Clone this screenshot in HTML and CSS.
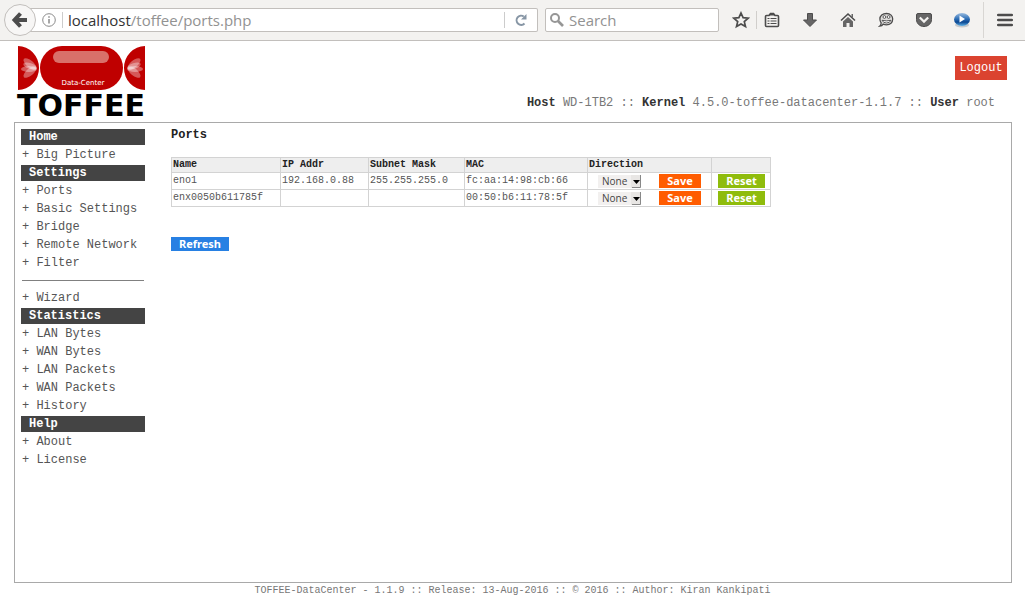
FILE: index.html
```html
<!DOCTYPE html>
<html lang="en">
<head>
<meta charset="utf-8">
<title>TOFFEE-DataCenter - Ports</title>
<link rel="stylesheet" href="styles.css">
</head>
<body>
<div class="toolbar">
  <button class="back" type="button" aria-label="Back">
    <svg width="32" height="32" viewBox="0 0 32 32"><circle cx="16" cy="16" r="15.500" fill="#f7f6f5" stroke="#c2bfbc"/><path d="M16.500 9.500L10.500 16L16.500 22.500M11 16H23" fill="none" stroke="#4c4c4c" stroke-width="4"/></svg>
  </button>
  <div class="url">
    <svg width="14" height="14" viewBox="0 0 14 14"><circle cx="7" cy="7" r="6.300" fill="none" stroke="#8a8a8a"/><path d="M7 6v4.500M7 3.300v1.500" stroke="#8a8a8a" stroke-width="1.500"/></svg>
    <span class="address"><b>localhost</b>/toffee/ports.php</span>
    <button class="reload" type="button" aria-label="Reload">
      <svg width="14" height="14" viewBox="0 0 14 14"><path d="M10.500 10.500A4.600 4.600 0 1 1 9.800 3.500" fill="none" stroke="#8796a5" stroke-width="2"/><path d="M12.500 1v5.500H7z" fill="#8796a5"/></svg>
    </button>
  </div>
  <label class="search">
    <svg width="14" height="14" viewBox="0 0 14 14"><circle cx="5" cy="5" r="4" fill="none" stroke="#969696" stroke-width="2"/><path d="M8 8L13 13" stroke="#969696" stroke-width="2.600"/></svg>
    <input type="text" placeholder="Search" aria-label="Search">
  </label>
  <div class="tools">
    <button class="tool star" type="button" aria-label="Bookmark"><svg width="18" height="18" viewBox="0 0 18 18"><path d="M9 2l2.100 4.700 5.100.5-3.900 3.400 1.200 5L9 13l-4.500 2.600 1.200-5L1.800 7.200l5.100-.5z" fill="none" stroke="#4c4c4c" stroke-width="1.700"/></svg></button>
    <button class="tool ruled" type="button" aria-label="Bookmarks list"><svg width="16" height="16" viewBox="0 0 16 16"><path d="M1.500 4.500q0-1 1-1H5l1.500-2h3l1.500 2h2.500q1 0 1 1v9q0 1-1 1h-11q-1 0-1-1z" fill="#f3f2f0" stroke="#4c4c4c" stroke-width="1.600"/><path d="M5 3.500l1.500-2h3l1.500 2z" fill="#4c4c4c"/><path d="M3.500 6.500h2M3.500 9h2M3.500 11.500h2M6.500 6.500h6M6.500 9h6M6.500 11.500h6" stroke="#4c4c4c" stroke-width="1.200"/></svg></button>
    <button class="tool" type="button" aria-label="Downloads"><svg width="16" height="16" viewBox="0 0 16 16"><path d="M5.500 1.500h5V8h4L8 14.500 1.500 8h4z" fill="#666" stroke="#4c4c4c"/></svg></button>
    <button class="tool" type="button" aria-label="Home"><svg width="16" height="16" viewBox="0 0 16 16"><path d="M1 8.500L8 2l7 6.500" fill="none" stroke="#4c4c4c" stroke-width="1.600"/><path d="M3 9.500l5-4.500 5 4.500V15H9.500v-4h-3v4H3zM11.500 2H13v4l-1.500-1.500z" fill="#666"/></svg></button>
    <button class="tool" type="button" aria-label="Chat"><svg width="16" height="16" viewBox="0 0 16 16"><path d="M8.500 1.500c4 0 6.200 2.400 6.200 5.600 0 3.400-2.500 5.800-6.200 5.800-1.300 0-2.400-.3-3.300-.7-.6 1-1.800 1.900-3.500 2 .9-.8 1.400-1.900 1.500-3.200C2.300 9.900 1.900 8.600 1.900 7.100c0-3.200 2.600-5.600 6.600-5.600z" fill="#dddcda" stroke="#4c4c4c" stroke-width="1.300"/><circle cx="6.400" cy="5" r="1.400" fill="#fff" stroke="#4c4c4c" stroke-width=".9"/><circle cx="10.600" cy="5" r="1.400" fill="#fff" stroke="#4c4c4c" stroke-width=".9"/><path d="M4 8.300q4.500 1.200 9 0-1.200 2.700-4.500 2.700T4 8.300z" fill="#fff" stroke="#4c4c4c" stroke-width=".9"/></svg></button>
    <button class="tool" type="button" aria-label="Pocket"><svg width="16" height="16" viewBox="0 0 16 16"><path d="M2 1.500h12q1.500 0 1.500 1.500v4.500c0 4-3.200 7-7.500 7S.5 11.500.5 7.500V3Q.5 1.500 2 1.500z" fill="#666" stroke="#4c4c4c"/><path d="M3.800 5.500L8 9.600l4.200-4.100" fill="none" stroke="#f3f2f0" stroke-width="2.200"/></svg></button>
    <button class="tool" type="button" aria-label="Media player"><svg width="16" height="16" viewBox="0 0 16 16"><defs><linearGradient id="orb" x2="0" y2="1"><stop stop-color="#9bbcdf"/><stop offset=".45" stop-color="#2d6fb7"/><stop offset=".7" stop-color="#0b4791"/><stop offset="1" stop-color="#5fb3ea"/></linearGradient></defs><ellipse cx="8" cy="13" rx="7" ry="2.500" fill="#c5c9cd"/><ellipse cx="8" cy="7.500" rx="8" ry="6.500" fill="url(#orb)"/><path d="M5.500 3.500L11 7l-5.500 3.500z" fill="#fff"/></svg></button>
    <button class="tool menu" type="button" aria-label="Menu"><svg width="16" height="16" viewBox="0 0 16 16"><path d="M1.200 3h13.600M1.200 8h13.600M1.200 13h13.600" stroke="#4c4c4c" stroke-width="2.600" stroke-linecap="round"/></svg></button>
  </div>
</div>

<header class="masthead">
  <svg class="logo" width="134" height="80" viewBox="-2 0 134 80" role="img" aria-label="Toffee Data-Center">
    <path d="M2 1a21 22 0 0 1 0 44zM129 1a21 22 0 0 0 0 44z" fill="#bf0000"/>
    <rect x="24" y="1" width="83" height="44" rx="22" fill="#bf0000"/>
    <rect x="37" y="6" width="56" height="12" rx="6" fill="#d9706a"/>
    <g fill="#fff" fill-opacity=".35">
      <ellipse cx="14" cy="19" rx="8" ry="3.500" transform="rotate(40 14 19)"/>
      <ellipse cx="14" cy="27" rx="8" ry="3.500" transform="rotate(-40 14 27)"/>
      <ellipse cx="14" cy="21" rx="7" ry="3" transform="rotate(18 14 21)"/>
      <ellipse cx="13" cy="24" rx="8" ry="3"/>
      <ellipse cx="118" cy="19" rx="8" ry="3.500" transform="rotate(-40 118 19)"/>
      <ellipse cx="118" cy="27" rx="8" ry="3.500" transform="rotate(40 118 27)"/>
      <ellipse cx="118" cy="21" rx="7" ry="3" transform="rotate(-18 118 21)"/>
      <ellipse cx="119" cy="24" rx="8" ry="3"/>
    </g>
    <text class="logo-tag" x="67" y="40">Data-Center</text>
    <text class="logo-name" x="65" y="71">TOFFEE</text>
  </svg>
  <div class="session">
    <button class="logout" type="button">Logout</button>
    <p class="host"><b>Host</b> WD-1TB2 :: <b>Kernel</b> 4.5.0-toffee-datacenter-1.1.7 :: <b>User</b> root</p>
  </div>
</header>

<div class="panel">
  <nav class="sidebar">
    <h2>Home</h2>
    <a href="#">+ Big Picture</a>
    <h2>Settings</h2>
    <a href="#">+ Ports</a>
    <a href="#">+ Basic Settings</a>
    <a href="#">+ Bridge</a>
    <a href="#">+ Remote Network</a>
    <a href="#">+ Filter</a>
    <hr>
    <a href="#">+ Wizard</a>
    <h2>Statistics</h2>
    <a href="#">+ LAN Bytes</a>
    <a href="#">+ WAN Bytes</a>
    <a href="#">+ LAN Packets</a>
    <a href="#">+ WAN Packets</a>
    <a href="#">+ History</a>
    <h2>Help</h2>
    <a href="#">+ About</a>
    <a href="#">+ License</a>
  </nav>
  <main class="content">
    <h1>Ports</h1>
    <table class="ports">
      <colgroup><col class="c-name"><col class="c-ip"><col class="c-mask"><col class="c-mac"><col class="c-dir"><col class="c-reset"></colgroup>
      <thead>
        <tr><th>Name</th><th>IP Addr</th><th>Subnet Mask</th><th>MAC</th><th>Direction</th><th></th></tr>
      </thead>
      <tbody>
        <tr>
          <td><a href="#">eno1</a></td><td>192.168.0.88</td><td>255.255.255.0</td><td>fc:aa:14:98:cb:66</td>
          <td><div class="direction"><span class="picker"><select aria-label="Direction of eno1"><option>None</option></select><svg width="10" height="13" viewBox="0 0 10 13"><path d="M0 0h10v13H0z" fill="#e8e6e4"/><path d="M9.500 0v12.500H1" fill="none" stroke="#888"/><path d="M2 5h7L5.500 9z" fill="#000"/></svg></span><button class="btn save" type="button">Save</button></div></td>
          <td><button class="btn reset" type="button">Reset</button></td>
        </tr>
        <tr>
          <td>enx0050b611785f</td><td></td><td></td><td>00:50:b6:11:78:5f</td>
          <td><div class="direction"><span class="picker"><select aria-label="Direction of enx0050b611785f"><option>None</option></select><svg width="10" height="13" viewBox="0 0 10 13"><path d="M0 0h10v13H0z" fill="#e8e6e4"/><path d="M9.500 0v12.500H1" fill="none" stroke="#888"/><path d="M2 5h7L5.500 9z" fill="#000"/></svg></span><button class="btn save" type="button">Save</button></div></td>
          <td><button class="btn reset" type="button">Reset</button></td>
        </tr>
      </tbody>
    </table>
    <button class="btn refresh" type="button">Refresh</button>
  </main>
</div>
<footer class="footer">TOFFEE-DataCenter - 1.1.9 :: Release: 13-Aug-2016 :: © 2016 :: Author: Kiran Kankipati</footer>
</body>
</html>
```

FILE: styles.css
```css
* { box-sizing: border-box; }

body {
  margin: 0;
  min-height: 100vh;
  display: flex;
  flex-direction: column;
  background: #fff;
  color: #555;
  font: 12px/18px "Liberation Mono", "Courier New", monospace;
}

button, input, select { font: inherit; color: inherit; border: 0; padding: 0; margin: 0; }
button { cursor: pointer; }
svg { display: block; flex: none; }

/* Browser toolbar */
.toolbar {
  display: flex;
  align-items: center;
  height: 41px;
  padding-left: 4px;
  background: #f3f2f0;
  border-bottom: 1px solid #c2bfbc;
  font: 15px/22px "Open Sans", "Noto Sans", sans-serif;
}
.back { background: none; z-index: 1; }
.url, .search {
  display: flex;
  align-items: center;
  height: 24px;
  background: #fff;
  border: 1px solid #c2bfbc;
  border-radius: 2px;
}
.url { flex: 1; margin-left: -12px; padding-left: 18px; border-left: 0; }
.address {
  flex: 1;
  margin-left: 6px;
  padding-left: 5px;
  border-left: 1px solid #ccc;
  line-height: 16px;
  color: #929292;
}
.address b { font-weight: 400; color: #333; }
.reload {
  display: flex;
  justify-content: center;
  align-items: center;
  width: 33px;
  height: 16px;
  background: none;
  border-left: 1px solid #ccc;
}
.search { width: 174px; margin-left: 7px; padding-left: 4px; gap: 5px; }
.search input { flex: 1; min-width: 0; background: none; outline: 0; line-height: 20px; }
.search input::placeholder { color: #929292; opacity: 1; }
.tools { display: flex; align-items: center; }
.tool { display: flex; align-items: center; justify-content: center; width: 38px; height: 40px; background: none; }
.star { width: 37px; padding-left: 7px; }
.ruled { width: 35px; height: 18px; padding-right: 4px; border-left: 1px solid #d0cecb; }
.menu { width: 42px; height: 36px; border-left: 1px solid #d8d6d3; margin-left: 2px; }

/* Page header */
.masthead { display: flex; justify-content: space-between; height: 81px; padding: 4px 18px 0 14px; }
.logo { overflow: visible; }
.logo-tag { font: 7px "DejaVu Sans", sans-serif; fill: #fff; text-anchor: middle; }
.logo-name { font: bold 30px "DejaVu Sans", sans-serif; fill: #000; text-anchor: middle; }
.session { display: flex; flex-direction: column; align-items: flex-end; gap: 14px; padding-top: 11px; }
.logout { width: 52px; height: 24px; background: #db4330; color: #fff; }
.host { margin: 0 12px 0 0; color: #777; }
.host b { color: #333; }

/* Main panel */
.panel { flex: 1; display: flex; gap: 26px; margin: 0 13px 0 14px; padding: 5px 6px; border: 1px solid #a9a9a9; }
.sidebar { flex: none; width: 124px; display: flex; flex-direction: column; }
.sidebar h2 { margin: 1px 0; padding-left: 8px; background: #444; color: #fff; font-size: 12px; line-height: 16px; }
.sidebar a { padding-left: 1px; color: #555; text-decoration: none; white-space: nowrap; }
.sidebar hr { width: 122px; height: 1px; margin: 8px 1px; border: 0; background: #808080; }

.content { flex: 1; }
h1 { margin: 0 0 14px; color: #222; font-size: 12px; line-height: 15px; }
.ports { width: 600px; table-layout: fixed; border-collapse: collapse; font-size: 10px; line-height: 14px; }
.c-name { width: 109px; }
.c-ip { width: 88px; }
.c-mask { width: 96px; }
.c-mac { width: 123px; }
.c-dir { width: 124px; }
.c-reset { width: 59px; }
.ports th, .ports td { height: 17px; padding: 0 1px; border: 1px solid #d3d3d3; text-align: left; }
.ports th { height: 15px; background: #eee; color: #222; }
.ports a { color: #555; text-decoration: none; }
.direction { display: flex; align-items: center; padding-left: 9px; gap: 18px; }
.picker { display: grid; align-items: center; background: #f2f0ef; }
.picker select, .picker svg { grid-area: 1 / 1; }
.picker svg { justify-self: end; pointer-events: none; }
.picker select { appearance: none; width: 43px; height: 13px; padding-left: 4px; background: none; color: #444; font: 10px/13px "Open Sans", "Noto Sans", sans-serif; }

.btn { display: block; height: 14px; color: #fff; font: bold 11px/14px "Noto Sans", "Open Sans", sans-serif; }
.save { width: 42px; background: #ff5c00; }
.reset { width: 47px; margin-left: 5px; background: #8fbc0c; }
.refresh { width: 58px; margin-top: 30px; background: #2780e3; }

.footer { height: 22px; color: #777; font-size: 10px; line-height: 16px; text-align: center; }
```
